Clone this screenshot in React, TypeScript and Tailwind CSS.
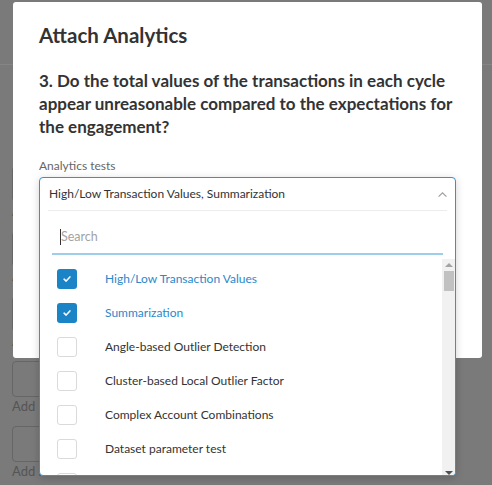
import React from "react";

const tests = [
  { label: "High/Low Transaction Values", checked: true },
  { label: "Summarization", checked: true },
  { label: "Angle-based Outlier Detection", checked: false },
  { label: "Cluster-based Local Outlier Factor", checked: false },
  { label: "Complex Account Combinations", checked: false },
  { label: "Dataset parameter test", checked: false },
  { label: "", checked: false },
];

const CheckIcon = () => (
  <svg viewBox="0 0 12 12" className="h-[10px] w-[10px]">
    <polyline points="2.5,6.2 5,8.5 9.5,3.5" fill="none" stroke="white" strokeWidth="1.8" strokeLinecap="round" strokeLinejoin="round" />
  </svg>
);

const BackgroundPage = () => (
  <div className="flex h-full flex-col">
    <div className="h-[65px] border-b border-[#858585]" />
    <div className="flex flex-col gap-[11px] pl-3 pt-[101px]">
      {["Add reference", "Add reference", "Add reference", "Add reference", "Add reference"].map((t, i) => (
        <div key={i} className="flex flex-col">
          <div className="h-[36px] w-[120px] rounded-sm border border-[#666]" />
          <span className="text-[13px] leading-[18px] text-[#555]">{t}</span>
        </div>
      ))}
    </div>
  </div>
);

const Scrollbar = () => (
  <div className="flex w-[13px] flex-col items-center bg-[#f1f1f1]">
    <div className="flex h-[12px] items-center justify-center">
      <div className="h-0 w-0 border-x-[4px] border-b-[4px] border-x-transparent border-b-[#a3a3a3]" />
    </div>
    <div className="h-[20px] w-[10px] bg-[#c1c1c1]" />
    <div className="flex-1" />
    <div className="flex h-[12px] items-center justify-center">
      <div className="h-0 w-0 border-x-[4px] border-t-[4px] border-x-transparent border-t-[#505050]" />
    </div>
  </div>
);

const AnalyticsSelect = () => (
  <div className="h-[299px] w-[417px] overflow-hidden rounded-sm border border-[#3d8fc6] bg-white shadow-[0_2px_8px_rgba(0,0,0,0.18)]">
    <div className="flex h-[32px] items-center justify-between pl-[9px] pr-[7px]">
      <span className="text-[12px] text-[#333]">High/Low Transaction Values, Summarization</span>
      <svg viewBox="0 0 12 8" className="h-[7px] w-[11px]">
        <polyline points="1.5,6.5 6,2 10.5,6.5" fill="none" stroke="#a0a0a0" strokeWidth="1.4" />
      </svg>
    </div>
    <div className="mx-2 border-t border-[#ececec]" />
    <div className="mx-3 flex h-[44px] items-center border-b-2 border-[#9dcfea] pl-2 pt-[10px]">
      <span className="h-[16px] w-px bg-[#333]" />
      <span className="text-[12.5px] text-[#a3a3a3]">Search</span>
    </div>
    <div className="mt-[4px] flex h-[220px]">
      <div className="flex flex-1 flex-col pt-[3px]">
        {tests.map((t, i) => (
          <div key={i} className="flex h-[34px] shrink-0 items-center pl-[17px]">
            {t.checked ? (
              <div className="flex h-5 w-5 items-center justify-center rounded-[3px] bg-[#1a84c7]">
                <CheckIcon />
              </div>
            ) : (
              <div className="h-5 w-5 rounded-[3px] border border-[#dadada] bg-white" />
            )}
            {t.label && (
              <span className={`ml-[28px] text-[12px] ${t.checked ? "text-[#2b88cb]" : "text-[#333]"}`}>{t.label}</span>
            )}
          </div>
        ))}
      </div>
      <Scrollbar />
    </div>
  </div>
);

export default function App() {
  return (
    <div className="relative h-[485px] w-[492px] overflow-hidden bg-[#7a7a7a] font-['Lato',sans-serif]">
      <BackgroundPage />
      <div className="absolute left-[13px] top-[2px] h-[356px] w-[469px] rounded-[3px] bg-white px-[26px] pt-[19px]">
        <h2 className="text-[20.5px] font-bold leading-[28px] text-[#333]">Attach Analytics</h2>
        <p className="mt-[20px] text-[17px] font-bold leading-[23px] text-[#333]">
          3. Do the total values of the transactions in each cycle appear unreasonable compared to the expectations for the engagement?
        </p>
        <label className="mt-[20px] block text-[12px] leading-[16px] text-[#666]">Analytics tests</label>
        <div className="mt-[3px]">
          <AnalyticsSelect />
        </div>
      </div>
    </div>
  );
}
